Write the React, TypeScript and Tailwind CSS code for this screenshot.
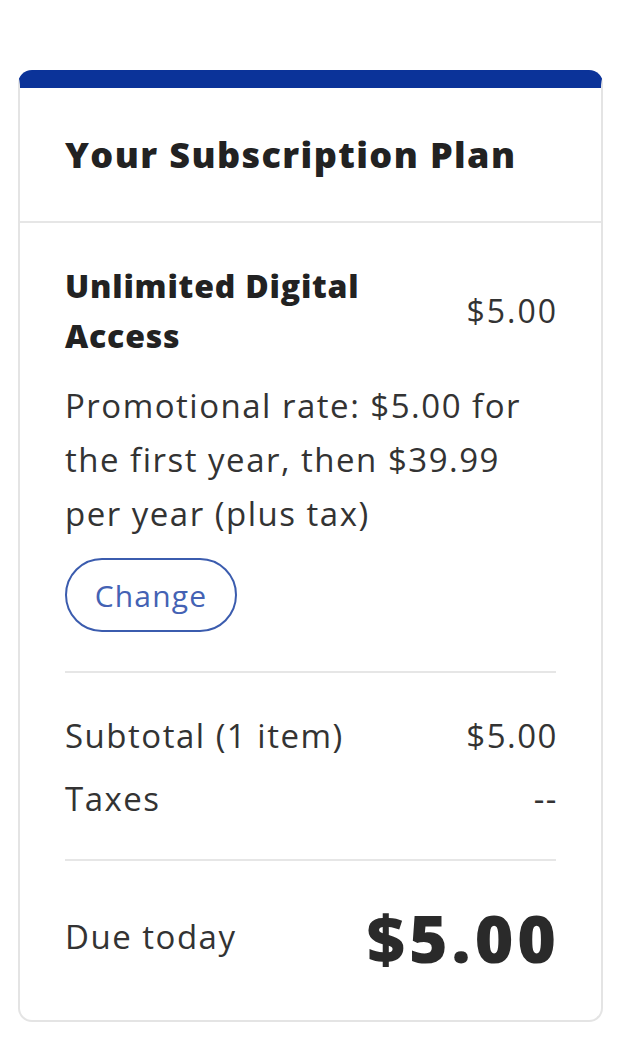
import React from 'react';

const App: React.FC = () => {
  return (
    <div className="min-h-screen bg-white pt-[70px] pl-[18px]" style={{ fontFamily: '"Open Sans", "Noto Sans", sans-serif' }}>
      <div className="w-[585px] rounded-[14px] border-2 border-[#e4e4e4] border-t-[18px] border-t-[#0b3399] bg-white">
        <div className="h-[135px] flex items-center px-[45px] border-b-2 border-[#e6e6e6]">
          <h2 className="text-[36px] font-extrabold text-[#222] tracking-[1.4px]">
            Your Subscription Plan
          </h2>
        </div>

        <div className="px-[45px] pt-[38px]">
          <div className="flex items-center justify-between">
            <div className="max-w-[330px] text-[32px] leading-[50px] font-extrabold tracking-[0.8px] text-[#222]">
              Unlimited Digital Access
            </div>
            <div className="-mr-[2px] text-[32px] tracking-[2px] text-[#333]">$5.00</div>
          </div>

          <p className="mt-[18px] text-[33px] leading-[54px] tracking-[1.5px] text-[#333]">
            Promotional rate: $5.00 for the first year, then $39.99 per year (plus tax)
          </p>

          <button className="mt-[17px] h-[74px] w-[172px] rounded-full border-2 border-[#3b5cae] text-[30px] tracking-[1.2px] text-[#4462b4]">
            Change
          </button>

          <div className="mt-[39px] border-t-2 border-[#e6e6e6]" />

          <div className="pt-[43px] pb-[40px] flex flex-col gap-[23px] text-[33px] leading-[40px] tracking-[1.5px] text-[#333]">
            <div className="flex justify-between">
              <span>Subtotal (1 item)</span>
              <span className="-mr-[2px]">$5.00</span>
            </div>
            <div className="flex justify-between">
              <span>Taxes</span>
              <span className="-mr-[2px]">--</span>
            </div>
          </div>

          <div className="border-t-2 border-[#e6e6e6]" />

          <div className="h-[159px] pb-[7px] flex items-center justify-between">
            <span className="text-[33px] tracking-[1.5px] text-[#333]">Due today</span>
            <span className="-mr-[4px] text-[66px] font-extrabold tracking-[4px] text-[#2a2a2a] leading-none">$5.00</span>
          </div>
        </div>
      </div>
    </div>
  );
};

export default App;
